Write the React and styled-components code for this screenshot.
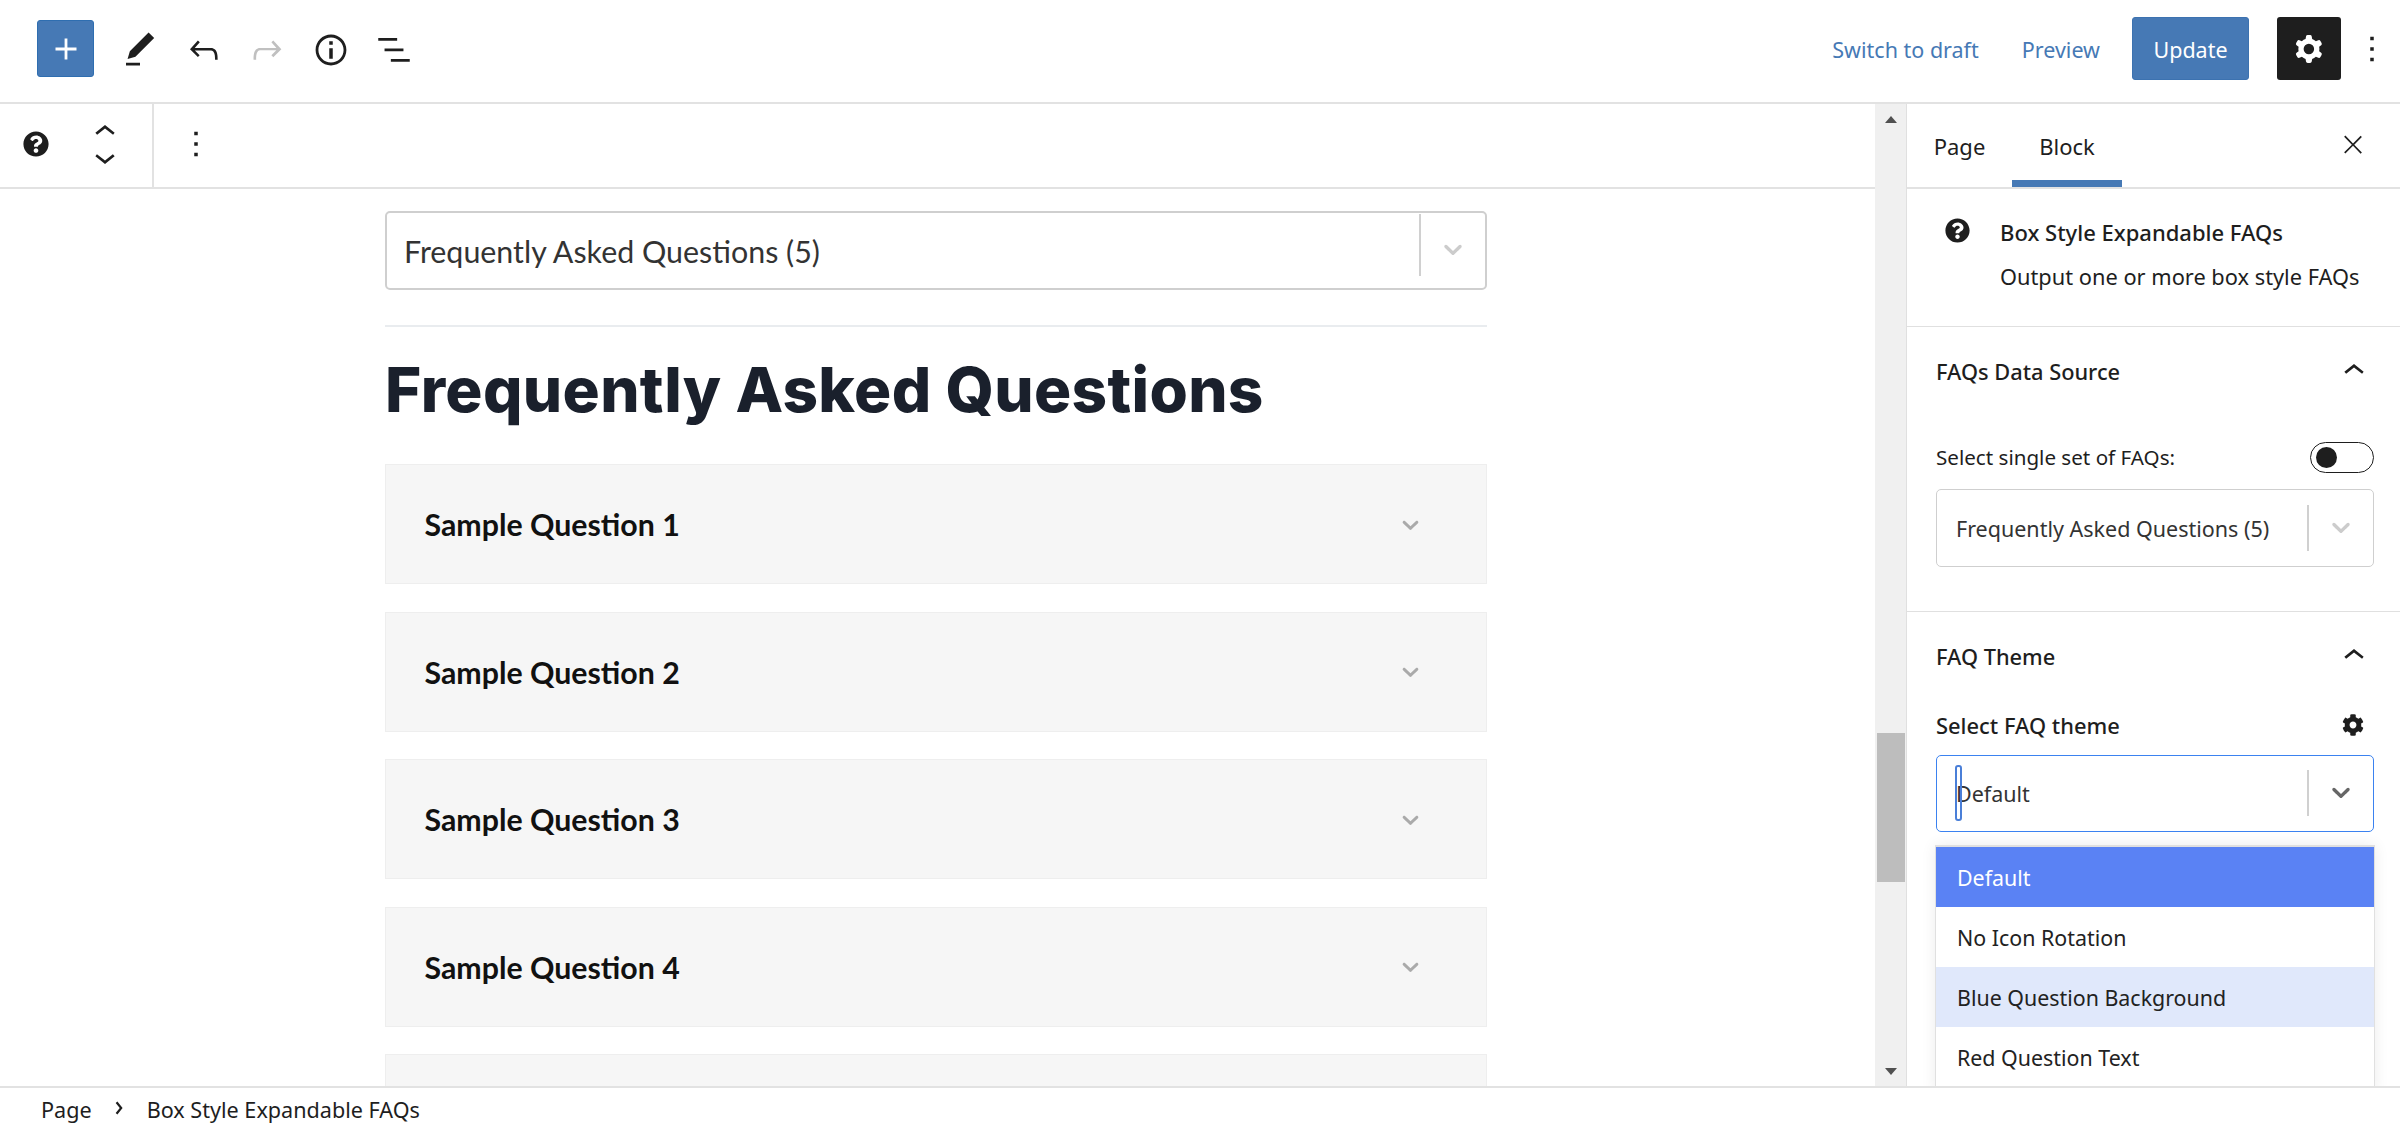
import React from "react";
import styled, { createGlobalStyle } from "styled-components";
import { FaCog, FaQuestionCircle } from "react-icons/fa";

const UI_FONT = `"Noto Sans", "Open Sans", sans-serif`;

const Global = createGlobalStyle`
  * { box-sizing: border-box; }
  html, body { margin: 0; padding: 0; background: #fff; }
  body { font-family: ${UI_FONT}; color: #1e1e1e; }
`;

const Svg = ({ d, size = 42, box = 24, evenodd, color = "currentColor" }) => (
  <svg width={size} height={size} viewBox={`0 0 ${box} ${box}`} fill={color} style={{ display: "block" }}>
    <path d={d} fillRule={evenodd ? "evenodd" : undefined} clipRule={evenodd ? "evenodd" : undefined} />
  </svg>
);

const paths = {
  plus: "M18 11.2h-5.2V6h-1.6v5.2H6v1.6h5.2V18h1.6v-5.2H18z",
  pencil: "M20.1 5.1L16.9 2 6.2 12.7l-1.3 4.4 4.5-1.3L20.1 5.1zM4 20.8h8v-1.5H4v1.5z",
  undo: "M18.3 11.7c-.6-.6-1.4-.9-2.3-.9H6.7l2.9-3.3-1.1-1-4.5 5L8.5 16l1-1-2.7-2.7H16c.5 0 .9.2 1.3.5 1 1 1 3.4 1 4.5v.3h1.5v-.2c0-1.5 0-4.3-1.5-5.7z",
  redo: "M15.6 6.5l-1.1 1 2.9 3.3H8c-.9 0-1.7.3-2.3.9-1.4 1.5-1.4 4.2-1.4 5.6v.2h1.5v-.3c0-1.1 0-3.5 1-4.5.3-.3.7-.5 1.3-.5h9.2L14.5 15l1.1 1.1 4.6-4.6-4.6-5z",
  info: "M12 3.2c-4.8 0-8.8 3.9-8.8 8.8 0 4.8 3.9 8.8 8.8 8.8 4.8 0 8.8-3.9 8.8-8.8 0-4.8-4-8.8-8.8-8.8zm0 16c-4 0-7.2-3.3-7.2-7.2C4.8 8 8 4.8 12 4.8s7.2 3.3 7.2 7.2c0 4-3.2 7.2-7.2 7.2zM11 17h2v-6h-2v6zm0-8h2V7h-2v2z",
  list: "M13.8 5.2H3v1.5h10.8V5.2zm-3.6 12v1.5H21v-1.5H10.2zm7.2-6H6.6v1.5h10.8v-1.5z",
  cog: "M10.289 4.836A1 1 0 0111.275 4h1.306a1 1 0 01.987.836l.244 1.466c.787.26 1.503.679 2.108 1.218l1.393-.522a1 1 0 011.216.437l.653 1.13a1 1 0 01-.23 1.273l-1.148.944a6.025 6.025 0 010 2.435l1.149.946a1 1 0 01.23 1.272l-.653 1.13a1 1 0 01-1.216.437l-1.394-.522c-.605.54-1.32.958-2.108 1.218l-.244 1.466a1 1 0 01-.987.836h-1.306a1 1 0 01-.986-.836l-.244-1.466a5.995 5.995 0 01-2.108-1.218l-1.394.522a1 1 0 01-1.217-.436l-.653-1.131a1 1 0 01.23-1.272l1.149-.946a6.026 6.026 0 010-2.435l-1.148-.944a1 1 0 01-.23-1.272l.653-1.131a1 1 0 011.217-.437l1.393.522a5.994 5.994 0 012.108-1.218l.244-1.466zM14.929 12a3 3 0 11-6 0 3 3 0 016 0z",
  more: "M13 19h-2v-2h2v2zm0-6h-2v-2h2v2zm0-6h-2V5h2v2z",
  moveUp: "M6.5 12.4L12 8l5.5 4.4-.9 1.2L12 10l-4.5 3.6-1-1.2z",
  moveDown: "M17.5 11.6L12 16l-5.5-4.4.9-1.2L12 14l4.5-3.6 1 1.2z",
  close: "M13 11.8l6.1-6.3-1-1-6.1 6.2-6.1-6.3-1 1 6.2 6.3-6.2 6.1 1 1 6.1-6.2 6.1 6.3 1-1z",
  chevronUp: "M6.5 12.4L12 8l5.5 4.4-.9 1.2L12 10l-4.5 3.6-1-1.2z",
  chevronRight: "M9.6 6L8 7.3 11.8 12 8 16.7 9.6 18 14.4 12z",
  select: "M4.516 7.548c0.436-0.446 1.043-0.481 1.576 0l3.908 3.747 3.908-3.747c0.533-0.481 1.141-0.446 1.574 0 0.436 0.445 0.408 1.197 0 1.615-0.406 0.418-4.695 4.502-4.695 4.502-0.217 0.223-0.502 0.335-0.787 0.335s-0.57-0.112-0.789-0.335c0 0-4.287-4.084-4.695-4.502s-0.436-1.17 0-1.615z",
};

const Shell = styled.div`
  height: 1127px;
  display: flex;
  flex-direction: column;
  overflow: hidden;
`;

const Header = styled.header`
  height: 104px;
  flex: none;
  display: flex;
  align-items: center;
  padding: 0 7px 5px 37px;
  border-bottom: 2px solid #e2e2e2;
`;

const AddButton = styled.button`
  width: 57px;
  height: 57px;
  padding: 0;
  border: 1px solid #2f6eb0;
  border-radius: 3px;
  background: #4679b5;
  color: #fff;
  display: flex;
  align-items: center;
  justify-content: center;
  margin-right: 25px;
`;

const ToolGroup = styled.div`
  display: flex;
  gap: 21.5px;
  margin-top: 2px;
  color: #1e1e1e;
`;

const ToolIcon = styled.span`
  display: block;
  color: ${(p) => (p.$muted ? "#c0c0c0" : "#1e1e1e")};
`;

const HeaderRight = styled.div`
  margin-left: auto;
  display: flex;
  align-items: center;
`;

const HeaderLink = styled.a`
  font-size: 21.5px;
  color: #4679b5;
  margin-top: 2px;
  margin-right: ${(p) => p.$gap}px;
`;

const UpdateButton = styled.button`
  width: 117px;
  height: 63px;
  border: 1px solid #3c72b0;
  border-radius: 3px;
  background: #4679b5;
  color: #fff;
  font: 21.5px ${UI_FONT};
  margin-right: 28px;
  padding: 2px 0 0;
`;

const SettingsButton = styled.button`
  width: 64px;
  height: 63px;
  border: 0;
  border-radius: 3px;
  background: #1e1e1e;
  color: #fff;
  padding: 0;
  display: flex;
  align-items: center;
  justify-content: center;
  margin-right: 10px;
`;

const Body = styled.div`
  flex: 1;
  min-height: 0;
  display: flex;
`;

const Main = styled.main`
  flex: 1;
  min-width: 0;
  display: flex;
  flex-direction: column;
`;

const BlockToolbar = styled.div`
  height: 85px;
  flex: none;
  display: flex;
  align-items: center;
  border-bottom: 2px solid #e2e2e2;
`;

const BlockTools = styled.div`
  width: 154px;
  height: 100%;
  display: flex;
  align-items: center;
  padding: 0 0 3px 23px;
  border-right: 2px solid #e2e2e2;
  color: #1e1e1e;
`;

const Movers = styled.div`
  margin-left: 35px;
  display: flex;
  flex-direction: column;
  align-items: center;
  height: 50px;
  justify-content: center;
  > span { height: 25px; display: flex; align-items: center; }
`;

const MoreTools = styled.div`
  margin: 0 0 3px 21px;
`;

const Canvas = styled.div`
  flex: 1;
  min-height: 0;
  overflow: hidden;
  padding: 22px 388px 0 385px;
`;

const Select = styled.div`
  display: flex;
  align-items: center;
  position: relative;
  height: ${(p) => p.$height}px;
  padding-left: ${(p) => p.$pad}px;
  border: 1px solid ${(p) => (p.$focus ? "#3b82f0" : "#cfcfcf")};
  border-radius: 5px;
  background: #fff;
  color: #333;
  font-size: ${(p) => p.$size}px;
`;

const SelectValue = styled.span`
  flex: 1;
  min-width: 0;
  white-space: nowrap;
`;

const TopSelect = styled(Select)`
  border-width: 2px;
  font-family: Lato, ${UI_FONT};
`;

const Separator = styled.span`
  width: 2px;
  align-self: flex-start;
  height: ${(p) => p.$height}px;
  margin-top: ${(p) => p.$top}px;
  background: #d0d0d0;
`;

const Arrow = styled.span`
  width: ${(p) => p.$width}px;
  display: flex;
  justify-content: center;
  color: ${(p) => (p.$dark ? "#666" : "#ccc")};
  margin-top: -3px;
`;

const Rule = styled.hr`
  margin: 35px 0 0;
  border: 0;
  height: 2px;
  background: #e9ecef;
`;

const Heading = styled.h1`
  margin: 21px 0 0;
  font: 800 62px/84px Inter, ${UI_FONT};
  letter-spacing: 0.35px;
  color: #1a202c;
  height: 89px;
`;

const Questions = styled.div`
  margin-top: 27px;
  display: flex;
  flex-direction: column;
  gap: 27.5px;
`;

const Question = styled.div`
  height: 120px;
  flex: none;
  display: flex;
  align-items: center;
  justify-content: space-between;
  padding: 0 62px 0 38.5px;
  background: #f6f6f6;
  border: 1px solid #eeeeee;
  font: 700 30.3px Lato, ${UI_FONT};
  color: #111;
`;

const QuestionArrow = styled.span`
  color: #aaa;
`;

const Track = styled.div`
  width: 31px;
  flex: none;
  background: #f0f0f0;
  display: flex;
  flex-direction: column;
  align-items: center;
  justify-content: space-between;
  padding: 12px 0 11px 1px;
  position: relative;
`;

const TrackArrow = styled.span`
  width: 0;
  height: 0;
  border-left: 6px solid transparent;
  border-right: 6px solid transparent;
  ${(p) => (p.$down ? "border-top: 7px solid #505050;" : "border-bottom: 7px solid #505050;")}
`;

const Thumb = styled.div`
  position: absolute;
  left: 2px;
  right: 1px;
  top: 629px;
  height: 149px;
  background: #bdbdbd;
`;

const Sidebar = styled.aside`
  width: 494px;
  flex: none;
  border-left: 1px solid #e0e0e0;
  display: flex;
  flex-direction: column;
`;

const Tabs = styled.div`
  height: 85px;
  flex: none;
  display: flex;
  border-bottom: 2px solid #e2e2e2;
  padding-right: 32px;
  font-size: 22px;
  align-items: stretch;
`;

const Tab = styled.div`
  width: ${(p) => p.$width}px;
  display: flex;
  align-items: center;
  justify-content: center;
  padding-top: 7px;
  border-bottom: 7px solid ${(p) => (p.$active ? "#4679b5" : "transparent")};
`;

const CloseButton = styled.span`
  margin-left: auto;
  align-self: center;
  margin-bottom: 2px;
`;

const BlockCard = styled.div`
  display: flex;
  padding: 27px 26px 0 38px;
  gap: 30px;
  border-bottom: 1px solid #e0e0e0;
  height: 138px;
  flex: none;
`;

const CardIcon = styled.span`
  margin-top: 2px;
  color: #1e1e1e;
  display: block;
`;

const CardTitle = styled.div`
  font-size: 22px;
  font-weight: 500;
  line-height: 30px;
  margin-top: 1px;
`;

const CardText = styled.div`
  font-size: 21.8px;
  line-height: 30px;
  margin-top: 15px;
`;

const Panel = styled.section`
  height: ${(p) => p.$height || 300}px;
  flex: none;
  padding: 0 26px 0 29px;
  border-bottom: ${(p) => (p.$last ? "0" : "1px solid #e0e0e0")};
`;

const PanelHead = styled.div`
  height: 88px;
  display: flex;
  align-items: center;
  justify-content: space-between;
  font-size: 21.8px;
  font-weight: 500;
  > span { margin-right: -1px; }
`;

const FieldRow = styled.div`
  display: flex;
  align-items: center;
  justify-content: space-between;
  height: 30px;
  margin: ${(p) => p.$top}px 0 ${(p) => p.$bottom}px;
`;

const FieldLabel = styled.span`
  font-size: ${(p) => (p.$strong ? 21.9 : 20.6)}px;
  font-weight: ${(p) => (p.$strong ? 500 : 400)};
`;

const Toggle = styled.span`
  width: 64px;
  height: 31px;
  border: 1px solid #1e1e1e;
  border-radius: 16px;
  display: flex;
  align-items: center;
  padding-left: 5px;
  &::before {
    content: "";
    width: 21px;
    height: 21px;
    border-radius: 50%;
    background: #1e1e1e;
  }
`;

const Caret = styled.span`
  position: absolute;
  left: 18px;
  top: 9px;
  width: 7px;
  height: 56px;
  border: 2px solid #4a7fd8;
  border-radius: 3px;
`;

const ThemeField = styled.div`
  position: relative;
`;

const Menu = styled.ul`
  position: absolute;
  top: 90px;
  left: -1px;
  right: -1px;
  margin: 0;
  padding: 0 0 4px;
  list-style: none;
  background: #fff;
  border: 1px solid #e0e0e0;
  border-top: 2px solid #e0e0e0;
  box-shadow: 0 0 14px rgba(0, 0, 0, 0.08);
  z-index: 2;
`;

const MenuItem = styled.li`
  height: 60px;
  display: flex;
  align-items: center;
  padding-left: 21px;
  font-size: 21.4px;
  background: ${(p) => (p.$selected ? "#5a82f4" : p.$hover ? "#e0e8fb" : "#fff")};
  color: ${(p) => (p.$selected ? "#fff" : "#222")};
`;

const Footer = styled.footer`
  height: 41px;
  flex: none;
  position: relative;
  z-index: 3;
  background: #fff;
  border-top: 2px solid #e2e2e2;
  display: flex;
  align-items: center;
  padding: 3px 0 0 41px;
  font-size: 21.6px;
`;

const Crumb = styled.span`
  display: flex;
  margin: -3px 14px 0 15px;
`;

const QUESTIONS = [1, 2, 3, 4];
const THEMES = ["Default", "No Icon Rotation", "Blue Question Background", "Red Question Text"];

export default function App() {
  return (
    <Shell>
      <Global />
      <Header>
        <AddButton><Svg d={paths.plus} /></AddButton>
        <ToolGroup>
          <ToolIcon><Svg d={paths.pencil} /></ToolIcon>
          <ToolIcon><Svg d={paths.undo} /></ToolIcon>
          <ToolIcon $muted><Svg d={paths.redo} /></ToolIcon>
          <ToolIcon><Svg d={paths.info} /></ToolIcon>
          <ToolIcon><Svg d={paths.list} /></ToolIcon>
        </ToolGroup>
        <HeaderRight>
          <HeaderLink $gap={43}>Switch to draft</HeaderLink>
          <HeaderLink $gap={32}>Preview</HeaderLink>
          <UpdateButton>Update</UpdateButton>
          <SettingsButton><Svg d={paths.cog} evenodd /></SettingsButton>
          <ToolIcon><Svg d={paths.more} /></ToolIcon>
        </HeaderRight>
      </Header>
      <Body>
        <Main>
          <BlockToolbar>
            <BlockTools>
              <FaQuestionCircle size={26} />
              <Movers>
                <span><Svg d={paths.moveUp} /></span>
                <span><Svg d={paths.moveDown} /></span>
              </Movers>
            </BlockTools>
            <MoreTools><ToolIcon><Svg d={paths.more} /></ToolIcon></MoreTools>
          </BlockToolbar>
          <Canvas>
            <TopSelect $height={79} $pad={17} $size={30.4}>
              <SelectValue>Frequently Asked Questions (5)</SelectValue>
              <Separator $height={62} $top={1} />
              <Arrow $width={64}><Svg d={paths.select} box={20} size={30} /></Arrow>
            </TopSelect>
            <Rule />
            <Heading>Frequently Asked Questions</Heading>
            <Questions>
              {QUESTIONS.map((n) => (
                <Question key={n}>
                  Sample Question {n}
                  <QuestionArrow><Svg d={paths.select} box={20} size={27} /></QuestionArrow>
                </Question>
              ))}
              <Question />
            </Questions>
          </Canvas>
        </Main>
        <Track>
          <TrackArrow />
          <Thumb />
          <TrackArrow $down />
        </Track>
        <Sidebar>
          <Tabs>
            <Tab $width={105}>Page</Tab>
            <Tab $width={110} $active>Block</Tab>
            <CloseButton><Svg d={paths.close} size={30} /></CloseButton>
          </Tabs>
          <BlockCard>
            <CardIcon><FaQuestionCircle size={25} /></CardIcon>
            <div>
              <CardTitle>Box Style Expandable FAQs</CardTitle>
              <CardText>Output one or more box style FAQs</CardText>
            </div>
          </BlockCard>
          <Panel $height={285}>
            <PanelHead>
              FAQs Data Source
              <span><Svg d={paths.chevronUp} /></span>
            </PanelHead>
            <FieldRow $top={27} $bottom={17}>
              <FieldLabel>Select single set of FAQs:</FieldLabel>
              <Toggle />
            </FieldRow>
            <Select $height={78} $pad={19} $size={21.5}>
              <SelectValue>Frequently Asked Questions (5)</SelectValue>
              <Separator $height={46} $top={15} />
              <Arrow $width={64}><Svg d={paths.select} box={20} size={30} /></Arrow>
            </Select>
          </Panel>
          <Panel $last>
            <PanelHead>
              FAQ Theme
              <span><Svg d={paths.chevronUp} /></span>
            </PanelHead>
            <FieldRow $top={10} $bottom={15}>
              <FieldLabel $strong>Select FAQ theme</FieldLabel>
              <FaCog size={22} style={{ marginRight: 10 }} />
            </FieldRow>
            <ThemeField>
              <Select $height={77} $pad={19} $size={21.5} $focus>
                <Caret />
                <SelectValue>Default</SelectValue>
                <Separator $height={46} $top={14} />
                <Arrow $width={64} $dark><Svg d={paths.select} box={20} size={30} /></Arrow>
              </Select>
              <Menu>
                {THEMES.map((t, i) => (
                  <MenuItem key={t} $selected={i === 0} $hover={i === 2}>{t}</MenuItem>
                ))}
              </Menu>
            </ThemeField>
          </Panel>
        </Sidebar>
      </Body>
      <Footer>
        Page
        <Crumb><Svg d={paths.chevronRight} size={26} /></Crumb>
        Box Style Expandable FAQs
      </Footer>
    </Shell>
  );
}
